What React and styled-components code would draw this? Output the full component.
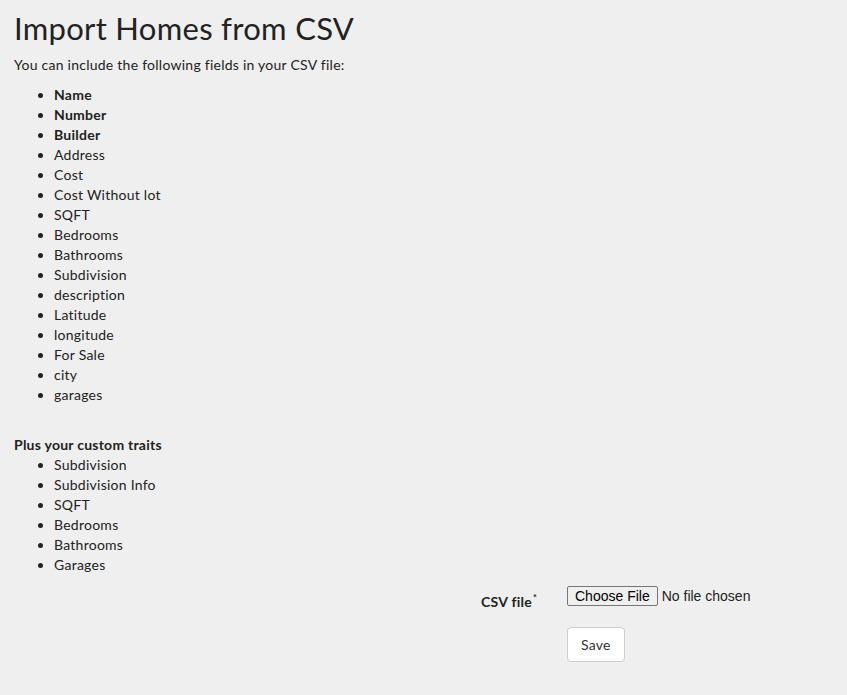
import React from 'react';
import styled, { createGlobalStyle } from 'styled-components';

const GlobalStyle = createGlobalStyle`
  html, body {
    margin: 0;
    background: #efefef;
  }
  body {
    font-family: Lato, "Open Sans", sans-serif;
    color: #222;
    font-size: 14px;
    letter-spacing: 0.25px;
  }
`;

const Page = styled.div`
  padding: 10px 14px 30px;
`;

const Title = styled.h1`
  margin: 0 0 9px;
  font-size: 31px;
  font-weight: 400;
  line-height: 36px;
  letter-spacing: 0.3px;
  color: #222;
`;

const Intro = styled.p`
  margin: 0 0 10px;
  line-height: 20px;
`;

const FieldList = styled.ul`
  margin: 0;
  padding-left: 40px;
  line-height: 20px;
`;

const Item = styled.li`
  font-weight: ${(p) => (p.$required ? 700 : 400)};
`;

const Subhead = styled.div`
  margin-top: 30px;
  font-weight: 700;
  line-height: 20px;
`;

const Form = styled.form`
  display: grid;
  grid-template-columns: 523px 1fr;
  column-gap: 30px;
  row-gap: 17px;
  margin-top: 7px;
`;

const Label = styled.label`
  justify-self: end;
  align-self: center;
  padding-top: 10px;
  font-weight: 700;
  sup {
    font-size: 9px;
    margin-left: 1px;
  }
`;

const FileRow = styled.div`
  display: flex;
  align-items: center;
  gap: 4px;
  font-family: "Liberation Sans", Arial, sans-serif;
  font-size: 14px;
  letter-spacing: 0;
`;

const FileButton = styled.button`
  font-family: inherit;
  font-size: 14px;
  padding: 1px 7px;
  border: 1px solid #767676;
  border-radius: 2px;
  background: #efefef;
  color: #000;
`;

const SaveButton = styled.button`
  grid-column: 2;
  justify-self: start;
  font-family: Lato, sans-serif;
  font-size: 14px;
  letter-spacing: 0.25px;
  padding: 8px 13px;
  background: #fff;
  color: #333;
  border: 1px solid #ccc;
  border-radius: 4px;
`;

const fields = [
  ['Name', true],
  ['Number', true],
  ['Builder', true],
  ['Address'],
  ['Cost'],
  ['Cost Without lot'],
  ['SQFT'],
  ['Bedrooms'],
  ['Bathrooms'],
  ['Subdivision'],
  ['description'],
  ['Latitude'],
  ['longitude'],
  ['For Sale'],
  ['city'],
  ['garages'],
];

const traits = ['Subdivision', 'Subdivision Info', 'SQFT', 'Bedrooms', 'Bathrooms', 'Garages'];

export default function App() {
  return (
    <>
      <GlobalStyle />
      <Page>
        <Title>Import Homes from CSV</Title>
        <Intro>You can include the following fields in your CSV file:</Intro>
        <FieldList>
          {fields.map(([name, req]) => (
            <Item key={name} $required={req}>{name}</Item>
          ))}
        </FieldList>
        <Subhead>Plus your custom traits</Subhead>
        <FieldList>
          {traits.map((t) => (
            <Item key={t}>{t}</Item>
          ))}
        </FieldList>
        <Form onSubmit={(e) => e.preventDefault()}>
          <Label>CSV file<sup>*</sup></Label>
          <FileRow>
            <FileButton type="button">Choose File</FileButton>
            <span>No file chosen</span>
          </FileRow>
          <SaveButton type="submit">Save</SaveButton>
        </Form>
      </Page>
    </>
  );
}
